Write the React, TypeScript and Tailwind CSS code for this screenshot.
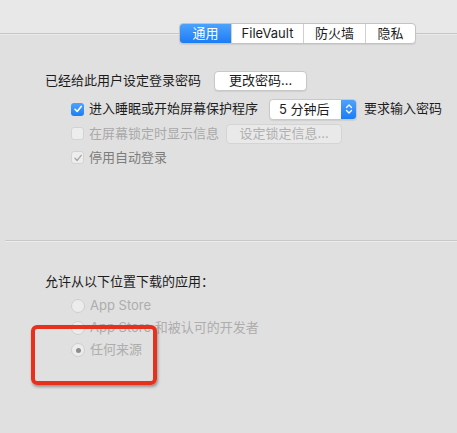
import React from "react";

const font = { fontFamily: '"Inter", "Noto Sans CJK SC", sans-serif' };

function Check({ checked, disabled }: { checked?: boolean; disabled?: boolean }) {
  if (checked && !disabled) {
    return (
      <div className="w-[13px] h-[13px] rounded-[3px] bg-gradient-to-b from-[#4ca2fd] to-[#1a7ef5] flex items-center justify-center shrink-0">
        <svg width="10" height="10" viewBox="0 0 10 10">
          <path d="M2 5.2 L4.2 7.4 L8.2 2.4" stroke="white" strokeWidth="1.6" fill="none" strokeLinecap="round" strokeLinejoin="round" />
        </svg>
      </div>
    );
  }
  return (
    <div className="w-[13px] h-[13px] rounded-[3px] bg-[#ededed] border border-[#d3d3d3] flex items-center justify-center shrink-0">
      {checked && (
        <svg width="10" height="10" viewBox="0 0 10 10">
          <path d="M2 5.2 L4.2 7.4 L8.2 2.4" stroke="#a6a6a6" strokeWidth="1.4" fill="none" strokeLinecap="round" strokeLinejoin="round" />
        </svg>
      )}
    </div>
  );
}

function Radio({ selected, label }: { selected?: boolean; label: string }) {
  return (
    <div className="h-[22px] flex items-center pl-[71px]">
      <div className="w-[14px] h-[14px] rounded-full bg-[#ececec] border border-[#cfcfcf] flex items-center justify-center shrink-0">
        {selected && <div className="w-[5px] h-[5px] rounded-full bg-[#8d8d8d]" />}
      </div>
      <span className="ml-[5px] text-[13px] text-[#adadad]">{label}</span>
    </div>
  );
}

export default function App() {
  return (
    <div className="w-[457px] h-[433px] bg-[#e0e0e0] relative overflow-hidden text-[13px] text-[#1c1c1c]" style={font}>
      <div className="h-[33px] bg-[#e8e8e8]" />
      <div className="border-t border-[#c6c6c6]">
        <div className="border-t border-[#e9e9e9]" />
        <div className="-mt-[12px] ml-[179px] flex h-[21px] w-[237px] rounded-[4px] border border-[#c3c3c3] bg-white shadow-[0_1px_1px_rgba(0,0,0,0.08)] overflow-hidden text-[13px] leading-none">
          <div className="w-[51px] bg-gradient-to-b from-[#4ca2fd] to-[#1b7cf4] text-white flex items-center justify-center">通用</div>
          <div className="w-[72px] border-l border-[#d0d0d0] flex items-center justify-center">FileVault</div>
          <div className="w-[62px] border-l border-[#d0d0d0] flex items-center justify-center">防火墙</div>
          <div className="flex-1 border-l border-[#d0d0d0] flex items-center justify-center">隐私</div>
        </div>
      </div>

      <div className="mt-[26px] h-[21px] flex items-center pl-[45px]">
        <span>已经给此用户设定登录密码</span>
        <div className="ml-[13px] w-[93px] h-[20px] rounded-[4px] bg-white border border-[#c8c8c8] shadow-[0_1px_1px_rgba(0,0,0,0.08)] flex items-center justify-center leading-none">更改密码...</div>
      </div>

      <div className="mt-[6px] h-[24px] flex items-center pl-[71px]">
        <Check checked />
        <span className="ml-[5px]">进入睡眠或开始屏幕保护程序</span>
        <div className="ml-[11px] w-[88px] h-[21px] rounded-[4px] bg-white border border-[#c8c8c8] shadow-[0_1px_1px_rgba(0,0,0,0.08)] flex overflow-hidden leading-none">
          <div className="flex-1 flex items-center pl-[9px]">5 分钟后</div>
          <div className="w-[15px] bg-gradient-to-b from-[#4ca2fd] to-[#1b7cf4] flex items-center justify-center">
            <svg width="8" height="12" viewBox="0 0 8 12">
              <path d="M1.5 4.5 L4 2 L6.5 4.5 M1.5 7.5 L4 10 L6.5 7.5" stroke="white" strokeWidth="1.3" fill="none" strokeLinecap="round" strokeLinejoin="round" />
            </svg>
          </div>
        </div>
        <span className="ml-[7px]">要求输入密码</span>
      </div>

      <div className="h-[25px] flex items-center pl-[71px]">
        <Check />
        <span className="ml-[5px] text-[#a9a9a9]">在屏幕锁定时显示信息</span>
        <div className="ml-[7px] w-[116px] h-[20px] rounded-[4px] bg-[#e9e9e9] border border-[#d4d4d4] flex items-center justify-center text-[#b0b0b0] leading-none">设定锁定信息...</div>
      </div>

      <div className="h-[23px] flex items-center pl-[71px]">
        <Check checked disabled />
        <span className="ml-[5px] text-[#7d7d7d]">停用自动登录</span>
      </div>

      <div className="mt-[71px] ml-[5px] border-t border-[#c9c9c9]">
        <div className="border-t border-[#ececec]" />
      </div>

      <div className="mt-[30px] h-[20px] flex items-center pl-[45px]">允许从以下位置下载的应用：</div>
      <div className="mt-[3px]">
        <Radio label="App Store" />
        <Radio label="App Store 和被认可的开发者" />
        <Radio selected label="任何来源" />
      </div>

      <div className="absolute left-[31px] top-[325px] w-[126px] h-[60px] rounded-[6px] border-[4px] border-[#e8311d] shadow-[1px_2px_3px_rgba(0,0,0,0.35)]" />
    </div>
  );
}
